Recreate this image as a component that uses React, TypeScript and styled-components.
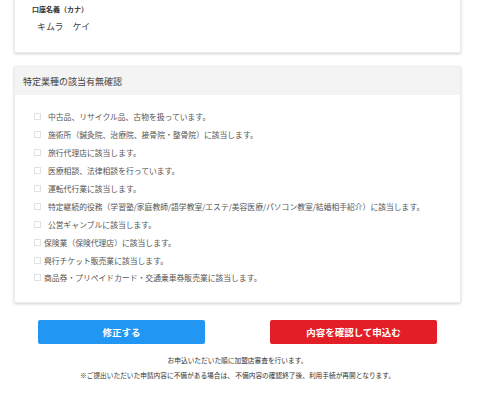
import React from 'react';
import styled, { createGlobalStyle } from 'styled-components';

const GlobalStyle = createGlobalStyle`
	html, body {
		margin: 0;
		padding: 0;
		background: #fff;
	}
	body {
		font-family: 'Noto Sans CJK JP', 'Noto Sans', sans-serif;
		color: #333;
	}
`;

const Page = styled.div`
	width: 447px;
	margin: -20px 0 0 14px;
`;

const Card = styled.section`
	background: #fff;
	border: 1px solid #ececec;
	border-radius: 2px;
	box-shadow: 0 1px 3px rgba(0, 0, 0, 0.18);
	margin-bottom: 13px;
`;

const CardBody = styled.div`
	padding: 22px 17px 17px;
`;

const FieldLabel = styled.div`
	font-size: 7px;
	font-weight: bold;
	line-height: 12px;
	color: #333;
`;

const FieldValue = styled.div`
	margin-top: 4px;
	padding-left: 5px;
	font-size: 9px;
	line-height: 16px;
	color: #444;
`;

const CardHeader = styled.header`
	height: 28px;
	display: flex;
	align-items: center;
	padding: 0 8px;
	background: #f4f4f4;
	font-size: 9px;
	color: #444;
`;

const CheckList = styled.ul`
	list-style: none;
	margin: 0;
	padding: 13px 0 15px 19px;
`;

const CheckRow = styled.li`
	display: flex;
	align-items: center;
	height: 17.9px;
	font-size: 7.8px;
	color: #555;
	white-space: nowrap;
`;

const Box = styled.span`
	width: 5px;
	height: 5px;
	border: 1px solid #e2e2e2;
	margin-right: 3px;
	flex-shrink: 0;
`;

const Label = styled.span<{ $indent?: boolean }>`
	padding-left: ${(p) => (p.$indent ? '4px' : '0')};
`;

const Actions = styled.div`
	display: flex;
	justify-content: center;
	gap: 65px;
	margin-top: 17px;
`;

const Button = styled.button<{ $tone: 'blue' | 'red' }>`
	width: 167px;
	height: 24px;
	border: 0;
	border-radius: 2px;
	background: ${(p) => (p.$tone === 'blue' ? '#2196f3' : '#e41e26')};
	color: #fff;
	font-family: inherit;
	font-size: 9.5px;
	font-weight: bold;
	cursor: pointer;
`;

const Notes = styled.div`
	margin-top: 9px;
	text-align: center;
	font-size: 6.7px;
	color: #333;
`;

const NoteLine = styled.div`
	height: 15px;
	line-height: 15px;
`;

const items: { text: string; indent?: boolean }[] = [
	{ text: '中古品、リサイクル品、古物を扱っています。', indent: true },
	{ text: '施術所（鍼灸院、治療院、接骨院・整骨院）に該当します。', indent: true },
	{ text: '旅行代理店に該当します。', indent: true },
	{ text: '医療相談、法律相談を行っています。', indent: true },
	{ text: '運転代行業に該当します。', indent: true },
	{
		text: '特定継続的役務（学習塾/家庭教師/語学教室/エステ/美容医療/パソコン教室/結婚相手紹介）に該当します。',
		indent: true,
	},
	{ text: '公営ギャンブルに該当します。', indent: true },
	{ text: '保険業（保険代理店）に該当します。' },
	{ text: '興行チケット販売業に該当します。' },
	{ text: '商品券・プリペイドカード・交通乗車券販売業に該当します。' },
];

const App = () => (
	<>
		<GlobalStyle />
		<Page>
			<Card>
				<CardBody>
					<FieldLabel>口座名義（カナ）</FieldLabel>
					<FieldValue>キムラ　ケイ</FieldValue>
				</CardBody>
			</Card>

			<Card>
				<CardHeader>特定業種の該当有無確認</CardHeader>
				<CheckList>
					{items.map((item) => (
						<CheckRow key={item.text}>
							<Box />
							<Label $indent={item.indent}>{item.text}</Label>
						</CheckRow>
					))}
				</CheckList>
			</Card>

			<Actions>
				<Button $tone="blue">修正する</Button>
				<Button $tone="red">内容を確認して申込む</Button>
			</Actions>

			<Notes>
				<NoteLine>お申込いただいた順に加盟店審査を行います。</NoteLine>
				<NoteLine>※ご提出いただいた申請内容に不備がある場合は、 不備内容の確認終了後、利用手続が再開となります。</NoteLine>
			</Notes>
		</Page>
	</>
);

export default App;
